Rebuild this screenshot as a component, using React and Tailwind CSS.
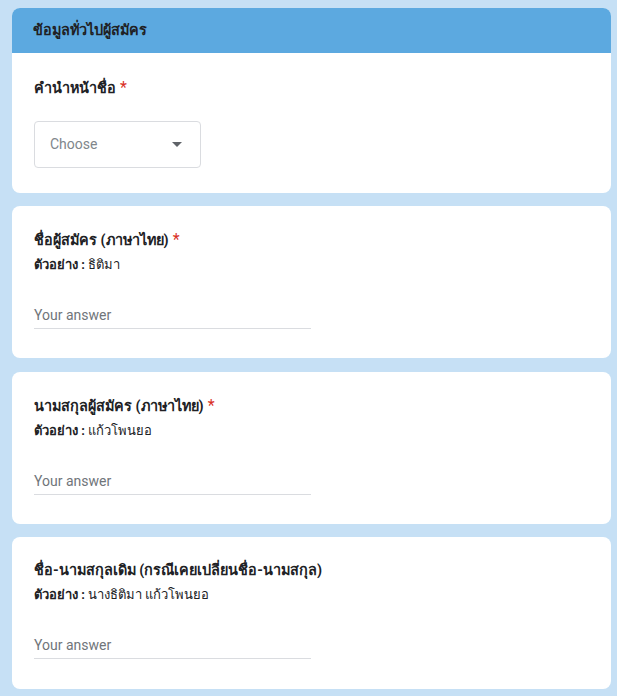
import React from 'react';

// Field cards for the applicant form
const fields = [
  { label: 'ชื่อผู้สมัคร (ภาษาไทย)', example: 'ธิติมา', required: true },
  { label: 'นามสกุลผู้สมัคร (ภาษาไทย)', example: 'แก้วโพนยอ', required: true },
  { label: 'ชื่อ-นามสกุลเดิม (กรณีเคยเปลี่ยนชื่อ-นามสกุล)', example: 'นางธิติมา แก้วโพนยอ', required: false },
];

const font = { fontFamily: 'Roboto, "Noto Sans", Tahoma, sans-serif' };

const TextField = ({ label, example, required }) => (
  <div className="bg-white rounded-lg pl-[22px] pt-[22px] h-[152px]">
    <div className="text-[14.4px] leading-6 font-bold text-[#202124]">
      {label}
      {required && <span className="text-[#d93025] font-normal text-[16px]"> *</span>}
    </div>
    <div className="text-[13px] leading-5 text-[#202124] mt-[2px]">
      <span className="font-bold">ตัวอย่าง : </span>
      {example}
    </div>
    <div className="w-[277px] h-[32px] mt-[22px] border-b border-[#dadce0] flex items-end pb-[3px]">
      <span className="text-[14px] leading-5 text-[#70757a]">Your answer</span>
    </div>
  </div>
);

export default function App() {
  return (
    <div className="min-h-[696px] w-full bg-white" style={font}>
      <div className="w-[617px] min-h-[696px] bg-[#c6e0f5] pt-2 pl-3 pr-[6px]">
        {/* Section header card */}
        <div className="bg-white rounded-lg overflow-hidden h-[185px]">
          <div className="h-[45px] bg-[#5ca9e0] px-[21px] flex items-center text-[14.4px] font-bold text-[#202124]">
            ข้อมูลทั่วไปผู้สมัคร
          </div>
          <div className="pl-[22px] pt-[23px]">
            <div className="text-[14.4px] leading-6 font-bold text-[#202124]">
              คำนำหน้าชื่อ<span className="text-[#d93025] font-normal text-[16px]"> *</span>
            </div>
            <div className="mt-[20px] w-[167px] h-[47px] border border-[#dadce0] rounded flex items-center justify-between pl-[15px] pr-[18px]">
              <span className="text-[14px] text-[#80868b]">Choose</span>
              <svg width="10" height="5" viewBox="0 0 10 5">
                <path d="M0 0 L10 0 L5 5 Z" fill="#5f6368" />
              </svg>
            </div>
          </div>
        </div>

        <div className="mt-[13px] flex flex-col gap-[13.5px]">
          {fields.map((f) => (
            <TextField key={f.label} {...f} />
          ))}
        </div>
      </div>
    </div>
  );
}
